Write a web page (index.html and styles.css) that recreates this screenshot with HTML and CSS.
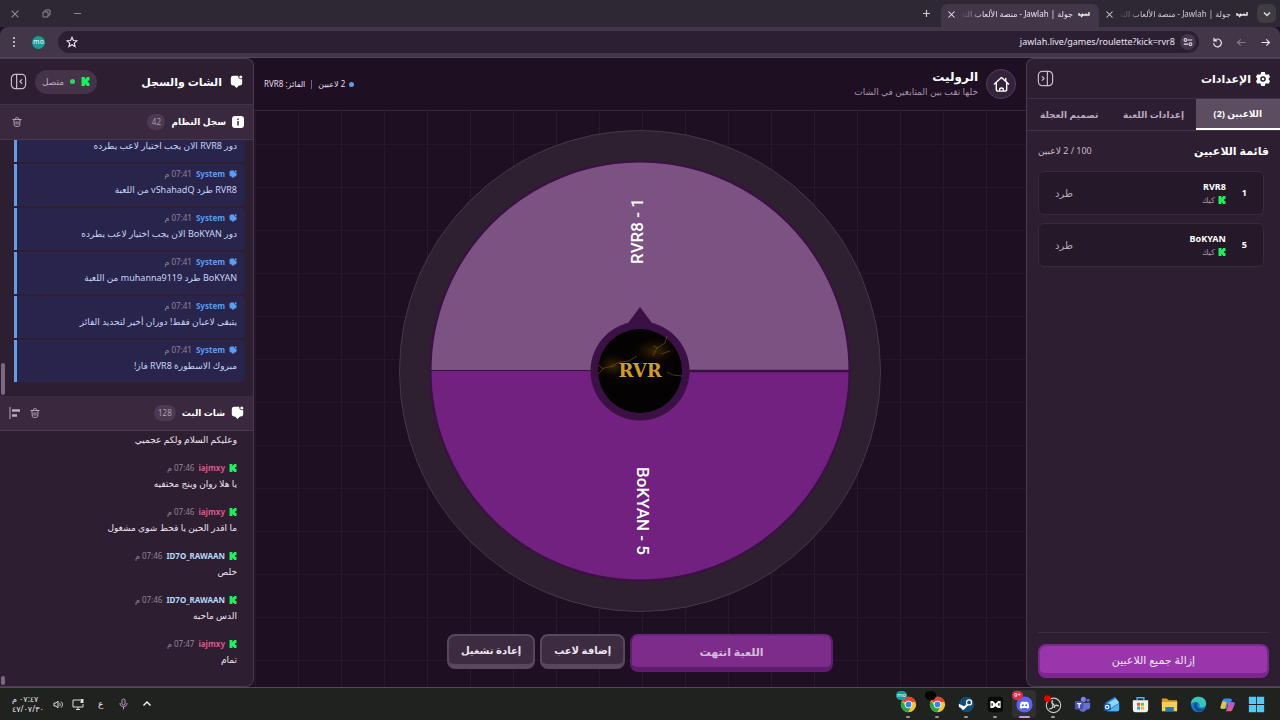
FILE: index.html
```html
<!DOCTYPE html>
<html lang="ar" dir="rtl">
<head>
<meta charset="utf-8">
<title>جولة | Jawlah - منصة الألعاب التفاعلية</title>
<link rel="stylesheet" href="styles.css">
</head>
<body>
<svg class="sprite" aria-hidden="true">
  <symbol id="kick" viewBox="0 0 16 16"><path fill="#1cf05c" d="M1 0h6v4h1V2h2V0h5v6h-2v1h-1v2h1v1h2v6h-5v-2H8v-2H7v4H1z"/></symbol>
  <symbol id="chat" viewBox="0 0 16 16"><path fill="currentColor" d="M4 1h6.200a3.200 3.200 0 0 0 .8 3 3.200 3.200 0 0 0 4 .8V10a3 3 0 0 1-3 3h-1l-3 3-3-3H4a3 3 0 0 1-3-3V4a3 3 0 0 1 3-3z"/><circle cx="13.300" cy="2.500" r="1.900" fill="currentColor"/></symbol>
  <symbol id="trash" viewBox="0 0 16 16"><g fill="none" stroke="currentColor" stroke-width="1.500" stroke-linecap="round"><path d="M1.500 4h13M5.500 4V2.500c0-1 .5-1.500 1.500-1.500h2c1 0 1.500.5 1.500 1.500V4M3 4l.7 9c.1 1.500.8 2 2 2h4.600c1.200 0 1.900-.5 2-2L13 4M6.500 7.500v4M9.500 7.500v4"/></g></symbol>
  <symbol id="panel" viewBox="0 0 18 18"><g fill="none" stroke="currentColor" stroke-width="1.300" stroke-linecap="round" stroke-linejoin="round"><rect x="1.500" y="1.500" width="15" height="15" rx="4"/><path d="M7 1.500v15M12.500 7l-2 2 2 2"/></g></symbol>
  <symbol id="cross" viewBox="0 0 12 12"><path d="M2 2l8 8M10 2l-8 8" fill="none" stroke="currentColor" stroke-width="1.400"/></symbol>
  <symbol id="arrow" viewBox="0 0 14 14"><path d="M2 7h10M8 3l4 4-4 4" fill="none" stroke="currentColor" stroke-width="1.500"/></symbol>
  <symbol id="chrome" viewBox="0 0 20 20"><circle cx="10" cy="10" r="9" fill="#f4c430"/><path d="M10 10L2.200 5.500A9 9 0 0 1 17.800 5.500L18.500 7H10z" fill="#e34234"/><path d="M2.200 5.500A9 9 0 0 0 9.500 19l4-7L10 10 6 11z" fill="#2ba24c"/><circle cx="10" cy="10" r="4.400" fill="#fff"/><circle cx="10" cy="10" r="3.400" fill="#3b82e8"/></symbol>
</svg>

<header class="tabstrip">
  <button class="tab-search" aria-label="بحث في علامات التبويب"><svg width="10" height="10" viewBox="0 0 10 10"><path d="M2 3.500l3 3 3-3" fill="none" stroke="#ddd" stroke-width="1.500"/></svg></button>
  <div class="tab"><svg class="favicon" viewBox="0 0 12 8"><path d="M11 2v3H8V3.500M8 5H4.500V3.500M5 5L3 7M1 3v2h2.500M9.500 7h.1" fill="none" stroke="#eee" stroke-width="1.400"/></svg><span class="tab-title">جولة | Jawlah - منصة الألعاب التفاعلية</span><button aria-label="إغلاق"><svg width="9" height="9"><use href="#cross"/></svg></button></div>
  <div class="tab active"><svg class="favicon" viewBox="0 0 12 8"><path d="M11 2v3H8V3.500M8 5H4.500V3.500M5 5L3 7M1 3v2h2.500M9.500 7h.1" fill="none" stroke="#eee" stroke-width="1.400"/></svg><span class="tab-title">جولة | Jawlah - منصة الألعاب التفاعلية</span><button aria-label="إغلاق"><svg width="9" height="9"><use href="#cross"/></svg></button></div>
  <button class="new-tab" aria-label="علامة تبويب جديدة"><svg width="9" height="9" viewBox="0 0 9 9"><path d="M4.500 1v7M1 4.500h7" stroke="#ccc" stroke-width="1.200"/></svg></button>
  <div class="window-buttons">
    <button aria-label="تصغير"><svg width="9" height="9" viewBox="0 0 9 9"><path d="M1 4.500h7" stroke="currentColor"/></svg></button>
    <button aria-label="استعادة"><svg width="9" height="9" viewBox="0 0 9 9"><path d="M1 3h5v5H1zM3 3V1h5v5H6" fill="none" stroke="currentColor"/></svg></button>
    <button aria-label="إغلاق النافذة"><svg width="10" height="10"><use href="#cross"/></svg></button>
  </div>
</header>

<nav class="toolbar">
  <button aria-label="رجوع"><svg width="11" height="11"><use href="#arrow"/></svg></button>
  <button class="dim" aria-label="تقدم"><svg class="flip" width="11" height="11"><use href="#arrow"/></svg></button>
  <button aria-label="تحديث"><svg width="11" height="11" viewBox="0 0 14 14"><path d="M3 4.500A5 5 0 1 1 2 8M2.500 1v4h4" fill="none" stroke="currentColor" stroke-width="1.500"/></svg></button>
  <div class="address">
    <button class="site-info" aria-label="معلومات الموقع"><svg width="10" height="10" viewBox="0 0 12 12"><g fill="none" stroke="currentColor" stroke-width="1.300"><circle cx="3" cy="3.500" r="1.700"/><circle cx="9" cy="8.500" r="1.700"/><path d="M6 3.500h5M1 8.500h5"/></g></svg></button>
    <input type="text" dir="ltr" aria-label="العنوان" value="jawlah.live/games/roulette?kick=rvr8">
    <button aria-label="إشارة مرجعية"><svg width="12" height="12" viewBox="0 0 14 14"><path d="M7 1.500l1.700 3.700 4 .4-3 2.700.9 4L7 10.200l-3.600 2.100.9-4-3-2.700 4-.4z" fill="none" stroke="currentColor" stroke-width="1.300"/></svg></button>
  </div>
  <button class="profile">mo</button>
  <button aria-label="القائمة"><svg width="10" height="12" viewBox="0 0 10 12"><g fill="#ddd"><circle cx="5" cy="2" r="1"/><circle cx="5" cy="6" r="1"/><circle cx="5" cy="10" r="1"/></g></svg></button>
</nav>

<main class="app">
  <aside class="panel settings">
    <div class="panel-head">
      <svg width="14" height="14" viewBox="0 0 16 16"><path fill="#fff" fill-rule="evenodd" d="M6 0h4l.7 2.500 1.300.7 2.500-.7 1.500 3L14.200 8l1.800 2.500-1.500 3-2.500-.7-1.300.7L10 16H6l-.7-2.500-1.300-.7-2.500.7-1.500-3L1.800 8 0 5.500l1.500-3 2.500.7 1.300-.7zM8 4.800a3.200 3.200 0 1 0 0 6.400 3.200 3.200 0 0 0 0-6.400zm0 1.700a1.500 1.500 0 1 1 0 3 1.500 1.500 0 0 1 0-3z"/></svg>
      <h2>الإعدادات</h2>
      <button class="push" aria-label="طي الإعدادات"><svg class="flip" width="17" height="17"><use href="#panel"/></svg></button>
    </div>
    <div class="tabs">
      <button class="selected">اللاعبين (2)</button>
      <button>إعدادات اللعبة</button>
      <button>تصميم العجلة</button>
    </div>
    <div class="players">
      <div class="players-head"><h3>قائمة اللاعبين</h3><span>100 / 2 لاعبين</span></div>
      <div class="player"><b class="num">1</b><div class="who"><b>RVR8</b><span><svg width="8" height="8"><use href="#kick"/></svg>كيك</span></div><button>طرد</button></div>
      <div class="player"><b class="num">5</b><div class="who"><b>BoKYAN</b><span><svg width="8" height="8"><use href="#kick"/></svg>كيك</span></div><button>طرد</button></div>
    </div>
    <div class="panel-foot"><button class="remove-all">إزالة جميع اللاعبين</button></div>
  </aside>

  <section class="stage">
    <div class="stage-head">
      <a class="home" href="#" aria-label="الرئيسية"><svg width="17" height="17" viewBox="0 0 18 18"><path d="M1.500 8.500L9 1.500l7.500 7M3.500 7v7c0 1.500.7 2 2 2h7c1.300 0 2-.5 2-2V7M13.500 5.500v-3M7 16v-1.500c0-2.500 4-2.500 4 0V16" fill="none" stroke="#fff" stroke-width="1.500" stroke-linecap="round" stroke-linejoin="round"/></svg></a>
      <div class="title"><h1>الروليت</h1><p>خلها تقب بين المتابعين في الشات</p></div>
      <div class="status"><i class="dot"></i><span>2 لاعبين</span><i class="bar"></i><span>الفائز: RVR8</span></div>
    </div>
    <div class="board">
      <svg class="wheel" viewBox="0 0 482 482" direction="ltr" role="img" aria-label="عجلة الروليت">
        <defs><radialGradient id="glow"><stop offset="0" stop-color="#5a3a08" stop-opacity=".65"/><stop offset="1" stop-color="#1a0d02" stop-opacity="0"/></radialGradient></defs>
        <circle cx="241" cy="241" r="240.500" fill="#2e1f31" stroke="#46374a"/>
        <circle cx="241" cy="241" r="209" fill="#722180"/>
        <path d="M32 241a209 209 0 0 1 418 0z" fill="#7c5283"/>
        <circle cx="241" cy="241" r="209.500" fill="none" stroke="#3b1044" stroke-width="2"/>
        <path d="M32 240.500h209" stroke="#3b1044"/><path d="M241 241h209" stroke="#3b1044" stroke-width="2.500"/>
        <path d="M241 177l15 20h-30z" fill="#3b1044"/>
        <circle cx="241" cy="241" r="49.500" fill="#3b1044"/>
        <circle cx="241" cy="241" r="42" fill="#040202"/>
        <ellipse cx="256" cy="221" rx="24" ry="14" fill="url(#glow)"/>
        <ellipse cx="214" cy="236" rx="18" ry="14" fill="url(#glow)"/>
        <g fill="none" stroke="#8a5c12" stroke-width=".8" opacity=".7"><path d="M199 244l6-6 9-2 6-4 10-1 8-5M204 239l-4-4M254 226l4-8 8-5 2-7M259 218l-5-2M268 242l6 3 9 1M262 224l9-3"/></g>
        <text class="hub-text" x="241" y="247">RVR</text>
        <text class="slice-text" transform="translate(244 101) rotate(-90)">RVR8 - 1</text>
        <text class="slice-text" transform="translate(238 381) rotate(90)">BoKYAN - 5</text>
      </svg>
    </div>
    <div class="actions">
      <button class="primary" disabled>اللعبة انتهت</button>
      <button>إضافة لاعب</button>
      <button>إعادة تشغيل</button>
    </div>
  </section>

  <aside class="panel chat">
    <div class="panel-head chat-head">
      <svg width="13" height="13"><use href="#chat"/></svg>
      <h2>الشات والسجل</h2>
      <div class="connected push"><svg width="9" height="9"><use href="#kick"/></svg><i></i><span>متصل</span></div>
      <button aria-label="طي الشات"><svg width="17" height="17"><use href="#panel"/></svg></button>
    </div>
    <div class="section-head">
      <svg width="12" height="12" viewBox="0 0 12 12"><rect width="12" height="12" rx="3" fill="#fff"/><path d="M6 5v4.500M6 2.500V4" stroke="#3c2a3f" stroke-width="1.500"/></svg>
      <h3>سجل النظام</h3><span class="count">42</span>
      <button class="push" aria-label="مسح السجل"><svg width="10" height="10"><use href="#trash"/></svg></button>
    </div>
    <div class="feed log">
      <article><header><svg width="8" height="8"><use href="#chat"/></svg><b>System</b><time>07:41 م</time></header><p>دور RVR8 الان يجب اختيار لاعب يطرده</p></article>
      <article><header><svg width="8" height="8"><use href="#chat"/></svg><b>System</b><time>07:41 م</time></header><p>RVR8 طرد vShahadQ من اللعبة</p></article>
      <article><header><svg width="8" height="8"><use href="#chat"/></svg><b>System</b><time>07:41 م</time></header><p>دور BoKYAN الان يجب اختيار لاعب يطرده</p></article>
      <article><header><svg width="8" height="8"><use href="#chat"/></svg><b>System</b><time>07:41 م</time></header><p>BoKYAN طرد muhanna9119 من اللعبة</p></article>
      <article><header><svg width="8" height="8"><use href="#chat"/></svg><b>System</b><time>07:41 م</time></header><p>يتبقى لاعبان فقط! دوران أخير لتحديد الفائز</p></article>
      <article><header><svg width="8" height="8"><use href="#chat"/></svg><b>System</b><time>07:41 م</time></header><p>مبروك الاسطورة RVR8 فاز!</p></article>
      <i class="thumb"></i>
    </div>
    <div class="section-head">
      <svg width="13" height="13"><use href="#chat"/></svg>
      <h3>شات البث</h3><span class="count">128</span>
      <button class="push" aria-label="مسح الشات"><svg width="10" height="10"><use href="#trash"/></svg></button>
      <button aria-label="محاذاة"><svg width="12" height="12" viewBox="0 0 12 12"><path d="M1 0v12" stroke="currentColor"/><path d="M3 3.500h8M3 8.500h5" stroke="currentColor" stroke-width="2.500"/></svg></button>
    </div>
    <div class="feed stream">
      <article><header><svg width="8" height="8"><use href="#kick"/></svg><b class="pink">iajmxy</b><time>07:46 م</time></header><p>وعليكم السلام ولكم عجميي</p></article>
      <article><header><svg width="8" height="8"><use href="#kick"/></svg><b class="pink">iajmxy</b><time>07:46 م</time></header><p>يا هلا روان وينج مختفيه</p></article>
      <article><header><svg width="8" height="8"><use href="#kick"/></svg><b class="pink">iajmxy</b><time>07:46 م</time></header><p>ما اقدر الحين يا قحط شوي مشغول</p></article>
      <article><header><svg width="8" height="8"><use href="#kick"/></svg><b class="blue">ID7O_RAWAAN</b><time>07:46 م</time></header><p>خلص</p></article>
      <article><header><svg width="8" height="8"><use href="#kick"/></svg><b class="blue">ID7O_RAWAAN</b><time>07:46 م</time></header><p>الدس ماحبه</p></article>
      <article><header><svg width="8" height="8"><use href="#kick"/></svg><b class="pink">iajmxy</b><time>07:47 م</time></header><p>تمام</p></article>
      <i class="thumb short"></i>
    </div>
  </aside>
</main>

<footer class="taskbar">
  <button class="task" aria-label="ابدأ"><svg viewBox="0 0 20 20"><path fill="#55c8f5" d="M1 1h8.500v8.500H1zM10.500 1H19v8.500h-8.500zM1 10.500h8.500V19H1zM10.500 10.500H19V19h-8.500z"/></svg></button>
  <button class="task" aria-label="Copilot"><svg viewBox="0 0 20 20"><path d="M7 3h6c2 0 2 1 2.500 3L13 7c-2 0-2 1-3 4l-1 4H4c-2 0-2.500-1-2-3l2-6c.6-2 1-3 3-3z" fill="#2f8fe8"/><path d="M2 12l2-6 5 1-2 8H4c-2 0-2.500-1-2-3z" fill="#e6c23c"/><path d="M11 7h5c2 0 3 1 2 3.500l-2 5C15.500 17 15 18 13 18H7c2 0 2-2 3-5z" fill="#e0588f"/><path d="M13 7h3c2 0 3 1 2 3.500L17 13l-5-2z" fill="#a35be8"/></svg></button>
  <button class="task" aria-label="Edge"><svg viewBox="0 0 20 20"><circle cx="10" cy="10" r="9" fill="#1976c8"/><path d="M1 10C1 4 5 1 10 1s9 3.500 9 7.500-3 5-6 5c-2 0-2.500-1-2-2 1-2-1-4.500-4-4.500S1.500 8 1 10z" fill="#37c6b4"/><path d="M7 7c-4 3-2 9 3 11.500 3 0 6-2 7-4-6 2-10-1-9-5z" fill="#0d4d96"/></svg></button>
  <button class="task" aria-label="مستكشف الملفات"><svg viewBox="0 0 20 20"><path d="M1 3h6l2 2h10v5H1z" fill="#d99b22"/><path d="M1 7h18v11H1z" fill="#fbcf55"/><path d="M5 13h10v5H5z" fill="#2878ae"/></svg></button>
  <button class="task" aria-label="Store"><svg viewBox="0 0 20 20"><path d="M6 5V2h8v3" fill="none" stroke="#46b4e8" stroke-width="1.600"/><path d="M1 5h18v11a3 3 0 0 1-3 3H4a3 3 0 0 1-3-3z" fill="#f2f2f2"/><path d="M6 8h3.500v3.500H6z" fill="#e8502e"/><path d="M10.500 8H14v3.500h-3.500z" fill="#78b82a"/><path d="M6 12.500h3.500V16H6z" fill="#2b9de0"/><path d="M10.500 12.500H14V16h-3.500z" fill="#f4b81c"/></svg></button>
  <button class="task" aria-label="Outlook"><svg viewBox="0 0 20 20"><path d="M3 8l11-7 5 6v9a2 2 0 0 1-2 2H5a2 2 0 0 1-2-2z" fill="#2f7fe0"/><path d="M6 8l9-5 4 5-10 6z" fill="#8fd6fa"/><path d="M5 18l14-9v7a2 2 0 0 1-2 2z" fill="#4bb4f4"/><rect x="1" y="9" width="8" height="8" rx="1.500" fill="#155ab8"/><circle cx="5" cy="13" r="2" fill="none" stroke="#fff" stroke-width="1.300"/></svg></button>
  <button class="task" aria-label="Teams"><svg viewBox="0 0 20 20"><circle cx="11" cy="4" r="3" fill="#7b83eb"/><circle cx="16.500" cy="5" r="2" fill="#5a62c8"/><path d="M13 8h6v5c0 2-2 3-4 3zM6 8h9v6c0 6-9 6-9 0z" fill="#6870d8"/><rect x="1" y="6" width="10" height="10" rx="1" fill="#4850b0"/><path d="M3.500 9h5M6 9v5" stroke="#fff" stroke-width="1.400"/></svg></button>
  <button class="task open" aria-label="OBS"><svg viewBox="0 0 20 20"><circle cx="10" cy="11" r="8.500" fill="#222" stroke="#ccc" stroke-width="1.300"/><path d="M9 5c-2 3 0 5 2 5M16 12c-3-2-5-1-5 2M5 15c4 0 5-2 4-5" fill="none" stroke="#ccc" stroke-width="1.700"/><circle cx="3" cy="3" r="4" fill="#e60000"/></svg></button>
  <button class="task open current" aria-label="Discord"><svg viewBox="0 0 20 20"><circle cx="10" cy="10" r="9.500" fill="#5865f2"/><path d="M4.500 14c0-3 .5-5.500 1.500-7l2.500-.6.5.8h2l.5-.8 2.500.6c1 1.500 1.500 4 1.500 7l-2.500 1-.7-1H7.700L7 15z" fill="#fff"/><circle cx="8" cy="10.800" r="1.200" fill="#5865f2"/><circle cx="12" cy="10.800" r="1.200" fill="#5865f2"/></svg><span class="badge red">9+</span></button>
  <button class="task open" aria-label="MEmu"><svg viewBox="0 0 20 20"><rect x="1" y="1" width="18" height="18" rx="4" fill="#080808"/><path d="M4 6h3l3 3 3-3h3v8h-3l-3-2-3 2H4z" fill="#fff"/><path d="M6 8.500v3M14 8.500v3" stroke="#080808" stroke-width="1.500"/></svg></button>
  <button class="task open" aria-label="Steam"><svg viewBox="0 0 20 20"><circle cx="10" cy="10" r="9" fill="#164a78"/><circle cx="13" cy="7.500" r="3" fill="none" stroke="#fff" stroke-width="1.500"/><path d="M1 9l6 3 4-3 1 2-4 4c-1 2-4 1-4-1l-3-1z" fill="#fff"/></svg></button>
  <button class="task open" aria-label="Chrome"><svg><use href="#chrome"/></svg><span class="badge black"></span></button>
  <button class="task open" aria-label="Chrome mo"><svg><use href="#chrome"/></svg><span class="badge teal">mo</span></button>
  <div class="tray">
    <svg class="more" width="10" height="10" viewBox="0 0 10 10"><path d="M1.500 6.500L5 3l3.500 3.500" fill="none" stroke="#fff" stroke-width="1.300"/></svg>
    <svg width="11" height="12" viewBox="0 0 11 12"><g fill="none" stroke="#c79bd0"><rect x="4" y="1" width="3" height="6" rx="1.500"/><path d="M2 5c0 5 7 5 7 0M5.500 9v2.500"/></g></svg>
    <span class="lang">ع</span>
    <svg width="12" height="12" viewBox="0 0 12 12"><path d="M8 2H1v7h10V6M4 11.500h4M6 9v2" fill="none" stroke="#ddd"/><rect x="8.500" y="1" width="3" height="4" fill="#ddd"/></svg>
    <svg width="11" height="11" viewBox="0 0 11 11"><path d="M1 4v3h2l2 2V2L3 4zM6.500 4c1 1 1 2 0 3M8 2.500c2 2 2 4 0 6" fill="none" stroke="#ddd"/></svg>
    <time><span>٠٧:٤٧ م</span><span>٤٧/٠٧/٣٠</span></time>
  </div>
</footer>
</body>
</html>
```
FILE: styles.css
```css
* { box-sizing: border-box; }
body {
  margin: 0;
  height: 100vh;
  display: flex;
  flex-direction: column;
  overflow: hidden;
  background: #1f0f23;
  color: #eee3f0;
  font: 9px/12px "Noto Sans", "DejaVu Sans", sans-serif;
}
h1, h2, h3, p { margin: 0; }
button, input { font: inherit; color: inherit; background: none; border: 0; padding: 0; }
svg { display: block; flex: none; }
.sprite { position: absolute; width: 0; height: 0; }
.flip { transform: scaleX(-1); }
.push { margin-inline-start: auto; }

/* browser chrome */
.tabstrip { flex: none; height: 27px; display: flex; align-items: flex-end; padding: 0 4px; background: #2d2834; }
.tab-search { align-self: center; width: 19px; height: 19px; border-radius: 6px; background: #403d42; display: grid; place-items: center; }
.tab { width: 158px; height: 23px; display: flex; align-items: center; gap: 5px; padding: 0 9px 3px 6px; border-radius: 7px 7px 0 0; font-size: 8px; color: #d5ccd8; }
.tab.active { background: #413748; color: #eee3f0; }
.favicon { width: 12px; height: 8px; }
.tab-title { flex: 1; white-space: nowrap; overflow: hidden; mask-image: linear-gradient(to right, transparent, #000 24px); }
.new-tab { align-self: center; margin-inline-start: 10px; }
.window-buttons { align-self: center; margin-inline-start: auto; display: flex; gap: 22px; padding-left: 6px; color: #8e8692; }
.toolbar { flex: none; height: 31px; display: flex; align-items: center; gap: 13px; padding: 0 9px; background: #413748; border-bottom: 1px solid #51445a; border-radius: 8px 8px 0 0; }
.toolbar .dim { color: #85788c; }
.address { flex: 1; height: 22px; display: flex; align-items: center; gap: 5px; padding: 0 3px 0 8px; border-radius: 11px; background: #2a1f33; }
.site-info { width: 16px; height: 16px; border-radius: 50%; background: #43374b; display: grid; place-items: center; }
.address input { flex: 1; min-width: 0; text-align: right; font-size: 9px; outline: 0; }
.profile { width: 13px; height: 13px; border-radius: 50%; background: #189c98; color: #fff; font-size: 7px; line-height: 12px; text-align: center; }

/* application */
.app { flex: 1; min-height: 0; display: flex; border-bottom: 1px solid #54485a; }
.panel { flex: none; width: 254px; display: flex; flex-direction: column; background: #2d1e31; border: 1px solid #4b3a50; overflow: hidden; }
.settings { border-radius: 8px 0 0 8px; border-right: 0; }
.chat { border-radius: 0 8px 8px 0; border-left: 0; }
.panel-head { flex: none; height: 40px; display: flex; align-items: center; gap: 5px; padding: 0 10px; border-bottom: 1px solid #40304a; color: #fff; }
.panel-head button { color: #c9b8cd; }
h2 { font-size: 11px; line-height: 16px; }
h3 { font-size: 11px; line-height: 16px; color: #fff; }
.tabs { flex: none; height: 32px; display: flex; border-bottom: 1px solid #43334a; font-size: 9px; font-weight: bold; }
.tabs button { flex: 1; color: #bcaac0; white-space: nowrap; }
.tabs .selected { background: #5c4d60; color: #fff; border-bottom: 2px solid #fff; }
.players { flex: 1; padding: 11px; display: flex; flex-direction: column; gap: 8px; }
.players-head { display: flex; justify-content: space-between; align-items: center; height: 17px; margin-bottom: 4px; }
.players-head span { color: #cbbccf; }
.player { height: 44px; margin-inline-start: 5px; padding: 0 16px; display: flex; align-items: center; gap: 16px; background: #251828; border: 1px solid #392a3d; border-radius: 6px; }
.num { color: #fff; }
.who { flex: 1; display: flex; flex-direction: column; gap: 1px; }
.who b { color: #fff; }
.who span { display: flex; align-items: center; gap: 3px; font-size: 8px; color: #a794ac; }
.player button { font-size: 10px; color: #b9a9bd; }
.panel-foot { margin: 0 11px; padding: 11px 0 8px; border-top: 1px solid #3d2d42; }
.remove-all { width: 100%; height: 34px; border: 2px solid #7d2690; border-bottom-width: 5px; border-radius: 8px; background: #9a36ab; font-size: 11px; }

.stage { flex: 1; min-width: 0; display: flex; flex-direction: column; background: repeating-linear-gradient(to right, #2a182e 0 1px, transparent 1px 43px) 1px 0, repeating-linear-gradient(#27162b 0 1px, transparent 1px 43px), #1f0f23; }
.stage-head { flex: none; height: 53px; display: flex; align-items: center; gap: 8px; padding: 0 10px; background: #1f0f23; border-bottom: 1px solid #37253b; }
.home { width: 30px; height: 30px; border: 1px solid #53405a; border-radius: 50%; background: #33223a; display: grid; place-items: center; }
h1 { font-size: 12px; line-height: 16px; color: #fff; }
.title p { color: #a592aa; line-height: 14px; }
.status { margin-inline-start: auto; display: flex; align-items: center; gap: 4px; font-size: 8px; color: #e8dceb; }
.dot { width: 5px; height: 5px; border-radius: 50%; background: #5b9cf0; }
.bar { width: 1px; height: 9px; background: #76657b; margin: 0 2px; }
.board { flex: 1; min-height: 0; display: flex; justify-content: center; padding-top: 19px; }
.wheel { height: 100%; max-width: 100%; }
.slice-text { fill: #fff; font: 500 17px Roboto, sans-serif; text-anchor: middle; direction: ltr; }
.hub-text { fill: #d2992c; font: bold 18px "DejaVu Serif", serif; text-anchor: middle; direction: ltr; }
.actions { flex: none; height: 75px; padding-top: 22px; display: flex; justify-content: center; align-items: flex-start; gap: 5px; }
.actions button { height: 35px; padding: 0 12px; border: 2px solid #594760; border-bottom-width: 5px; border-radius: 8px; background: #3d2b41; font-size: 10px; font-weight: bold; }
.actions .primary { width: 203px; height: 38px; border-color: #5f1b6d; border-top-color: #6c2380; background: #7d2c8c; color: #d3bcd8; font-size: 11px; }

/* chat panel */
.chat-head { height: 46px; gap: 8px; }
.connected { display: flex; align-items: center; gap: 6px; height: 24px; padding: 0 7px; border-radius: 12px; background: #453449; }
.connected i { width: 5px; height: 5px; border-radius: 50%; background: #2fd765; }
.connected span { color: #bcaabf; }
.section-head { flex: none; height: 35px; display: flex; align-items: center; gap: 6px; padding: 0 9px; background: #3a293e; border-bottom: 1px solid #493850; color: #fff; }
.section-head h3 { font-size: 9px; }
.section-head button { color: #b9aabd; margin-left: 3px; }
.section-head button:last-child { margin-left: 0; }
.section-head .push:last-child { margin-left: 3px; }
.count { min-width: 18px; height: 16px; line-height: 16px; padding: 0 4px; border-radius: 8px; background: #4b3a50; font-size: 8px; text-align: center; color: #ae9db3; }
.feed { position: relative; flex: 1; min-height: 0; overflow: hidden; display: flex; flex-direction: column; justify-content: flex-end; gap: 2px; padding: 0 8px 10px 14px; }
.feed article { flex: none; height: 42px; padding: 4px 8px; border-left: 3px solid transparent; border-radius: 0 4px 4px 0; }
.feed article header { display: flex; align-items: center; gap: 4px; height: 12px; font-size: 8px; }
.feed time { color: #93839a; }
.feed p { margin-top: 3px; line-height: 14px; white-space: nowrap; }
.log { color: #5c9cf0; }
.log article { background: #29244b; border-left-color: #659ce6; }
.log article:last-of-type { margin-bottom: 4px; }
.log p { color: #c6d5f8; }
.pink { color: #d95888; }
.blue { color: #b7d9fa; }
.thumb { position: absolute; left: 1px; bottom: 1px; width: 4px; height: 32px; border-radius: 2px; background: #7c6880; }
.thumb.short { height: 9px; }

/* taskbar */
.taskbar { flex: none; height: 32px; display: flex; align-items: center; gap: 5px; padding: 0 12px 0 12px; background: #20221f; }
.task { position: relative; width: 24px; height: 28px; display: grid; place-items: center; border-radius: 4px; }
.task svg { width: 17px; height: 17px; overflow: visible; }
.task.open::after { content: ""; position: absolute; bottom: 0; width: 4px; height: 2px; border-radius: 1px; background: #999; }
.task.current { background: #303030; }
.task.current::after { width: 11px; background: #c596dd; }
.badge { position: absolute; top: 1px; left: 0; width: 11px; height: 9px; border-radius: 5px; color: #fff; font-size: 6px; line-height: 9px; text-align: center; direction: ltr; }
.red { background: #d9304e; }
.black { background: #050505; }
.teal { background: #189c98; }
.tray { margin-inline-start: auto; display: flex; align-items: center; gap: 8px; }
.tray .more { margin-left: 5px; }
.lang { width: 18px; text-align: center; }
.tray time { display: flex; flex-direction: column; line-height: 10px; font-size: 8px; text-align: left; margin-inline-start: 1px; }
```
